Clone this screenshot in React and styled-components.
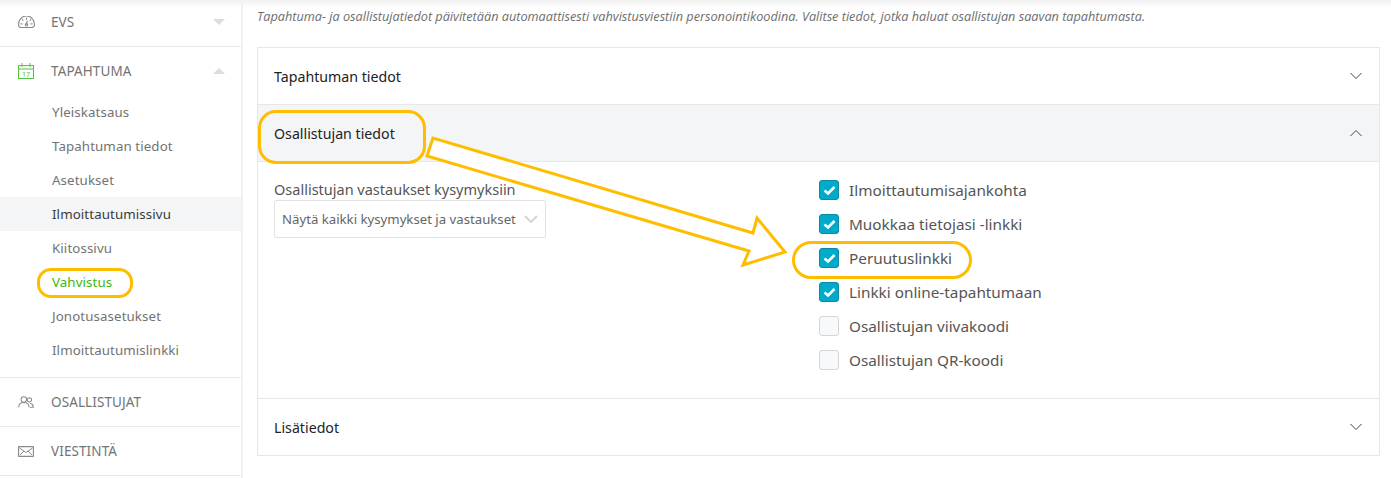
import styled, { createGlobalStyle } from "styled-components";

const GlobalStyle = createGlobalStyle`
  html, body {
    margin: 0;
    padding: 0;
    background: #fff;
    overflow: hidden;
  }
  * { box-sizing: border-box; }
`;

const Page = styled.div`
  position: relative;
  display: flex;
  width: 1391px;
  height: 478px;
  overflow: hidden;
  font-family: "Noto Sans", sans-serif;
`;

const TopShade = styled.div`
  position: absolute;
  left: 0;
  right: 0;
  top: 0;
  height: 8px;
  background: linear-gradient(#f1f1f1, rgba(255, 255, 255, 0));
`;

const Sidebar = styled.aside`
  width: 243px;
  flex: none;
  background: #fff;
  border-right: 2px solid #f1f1f2;
`;

const Section = styled.div`
  border-bottom: 1px solid #e9e9ea;
`;

const SectionHead = styled.div`
  display: flex;
  align-items: center;
  height: ${(p) => p.$height || 48}px;
  padding: 0 16px ${(p) => p.$bottom || 0}px 18px;
  color: #737373;
  font-size: 13.5px;
  letter-spacing: 0.1px;
`;

const IconSlot = styled.span`
  display: flex;
  width: 33px;
  flex: none;
`;

const SectionLabel = styled.span`
  flex: 1;
`;

const Triangle = styled.span`
  width: 0;
  height: 0;
  border-left: 6px solid transparent;
  border-right: 6px solid transparent;
  border-top: ${(p) => (p.$up ? "none" : "6px solid #dcdcdc")};
  border-bottom: ${(p) => (p.$up ? "6px solid #dcdcdc" : "none")};
`;

const SubList = styled.div`
  padding-bottom: 10px;
`;

const SubItem = styled.div`
  display: flex;
  align-items: center;
  height: 34px;
  padding-left: 52px;
  font-size: 13.3px;
  letter-spacing: 0.1px;
  color: ${(p) => (p.$current ? "#3fb60e" : p.$active ? "#3a3a3a" : "#737373")};
  background: ${(p) => (p.$active ? "#f4f5f7" : "transparent")};
`;

const Main = styled.main`
  flex: 1;
  padding: 9px 11px 0 14px;
`;

const Intro = styled.p`
  margin: 0 0 23px;
  height: 15px;
  line-height: 15px;
  font-family: "Open Sans", sans-serif;
  font-style: italic;
  font-size: 12.7px;
  color: #6e6e6e;
  white-space: nowrap;
`;

const Card = styled.div`
  width: 1123px;
  border: 1px solid #e6e7e8;
  background: #fff;
`;

const PanelHead = styled.div`
  display: flex;
  align-items: center;
  justify-content: space-between;
  height: ${(p) => p.$height || 57}px;
  padding: 0 16px;
  font-size: 14.2px;
  color: #222;
  background: ${(p) => (p.$open ? "#f4f5f7" : "#fff")};
  border-bottom: ${(p) => (p.$last ? "none" : "1px solid #e6e7e8")};
`;

const PanelBody = styled.div`
  display: grid;
  grid-template-columns: 545px 1fr;
  height: 237px;
  padding: 11px 16px 0;
  border-bottom: 1px solid #e6e7e8;
`;

const FieldColumn = styled.div`
  padding-top: 6px;
`;

const FieldLabel = styled.div`
  font-size: 14.5px;
  line-height: 20px;
  color: #555;
`;

const Select = styled.div`
  display: flex;
  align-items: center;
  justify-content: space-between;
  width: 272px;
  height: 38px;
  margin-top: 1px;
  padding: 0 7px 0 7px;
  border: 1px solid #e3e3e3;
  border-radius: 2px;
  font-size: 13.2px;
  color: #666;
  white-space: nowrap;
`;

const SelectArrow = styled.svg`
  flex: none;
`;

const CheckList = styled.div`
  display: flex;
  flex-direction: column;
`;

const CheckRow = styled.div`
  display: flex;
  align-items: center;
  gap: 10px;
  height: 34px;
  font-size: 15.3px;
  color: #555;
  white-space: nowrap;
`;

const Box = styled.span`
  display: flex;
  align-items: center;
  justify-content: center;
  width: 20px;
  height: 20px;
  flex: none;
  border-radius: 3px;
  border: 1px solid ${(p) => (p.$checked ? "#0b8ba5" : "#d5d6d8")};
  background: ${(p) => (p.$checked ? "#00aac9" : "#f8f9fa")};
`;

const Ring = styled.div`
  position: absolute;
  left: ${(p) => p.$x}px;
  top: ${(p) => p.$y}px;
  width: ${(p) => p.$w}px;
  height: ${(p) => p.$h}px;
  border: 3px solid #ffbd00;
  border-radius: ${(p) => p.$r}px;
`;

const ArrowLayer = styled.svg`
  position: absolute;
  left: 0;
  top: 0;
  pointer-events: none;
`;

const GaugeIcon = () => (
  <svg width="17" height="12" viewBox="0 0 18 13" fill="none" stroke="#8a8a8a" strokeWidth="1.200">
    <path d="M3.500 12.500h11a3 3 0 0 0 3-4A8.500 8.500 0 0 0 .5 8.500a3 3 0 0 0 3 4z" />
    <path d="M9 2v2M4 3.500l1.500 1.500M14 3.500l-1.500 1.500M2.500 8.500h2M13.500 8.500h2M8.500 9.500l1.500-4.500" />
    <circle cx="9" cy="9.500" r="1.300" />
  </svg>
);

const CalendarIcon = () => (
  <svg width="16" height="16" viewBox="0 0 16 16" fill="none" stroke="#54c23d" strokeWidth="1">
    <rect x=".5" y="2.500" width="15" height="13" />
    <path d="M.5 6h15M4 0v4M12 0v4" />
    <text x="8" y="14" textAnchor="middle" fontSize="7" fontFamily="Noto Sans, sans-serif" fill="#54c23d" stroke="none">17</text>
  </svg>
);

const UsersIcon = () => (
  <svg width="16" height="12" viewBox="0 0 18 14" fill="none" stroke="#8a8a8a" strokeWidth="1.200">
    <circle cx="6.500" cy="4" r="3.200" />
    <path d="M.5 13c0-3.500 2.500-5.500 6-5.500s6 2 6 5.500" />
    <circle cx="13" cy="4.500" r="2.500" />
    <path d="M14 8.500c2 .6 3.500 2.400 3.500 4.500h-4" />
  </svg>
);

const MailIcon = () => (
  <svg width="16" height="11" viewBox="0 0 16 11" fill="none" stroke="#8a8a8a" strokeWidth="1">
    <rect x=".5" y=".5" width="15" height="10" rx="1" strokeWidth="1.300" />
    <path d="M1.500 2l6.500 4.500L14.500 2M2 9l4-4M14 9l-4-4" />
  </svg>
);

const Chevron = ({ up }) => (
  <svg width="14" height="8" viewBox="0 0 14 8" fill="none" stroke="#444" strokeWidth="1">
    <path d={up ? "M1.500 7l5.500-5.500 5.500 5.500" : "M1.500 1l5.500 5.500 5.500-5.500"} />
  </svg>
);

const Tick = () => (
  <svg width="13" height="11" viewBox="0 0 13 11" fill="none" stroke="#fff" strokeWidth="2.600">
    <path d="M1.500 5.500l3.500 3 6.500-6.500" />
  </svg>
);

const subItems = [
  "Yleiskatsaus",
  "Tapahtuman tiedot",
  "Asetukset",
  "Ilmoittautumissivu",
  "Kiitossivu",
  "Vahvistus",
  "Jonotusasetukset",
  "Ilmoittautumislinkki",
];

const checks = [
  ["Ilmoittautumisajankohta", true],
  ["Muokkaa tietojasi -linkki", true],
  ["Peruutuslinkki", true],
  ["Linkki online-tapahtumaan", true],
  ["Osallistujan viivakoodi", false],
  ["Osallistujan QR-koodi", false],
];

export default function App() {
  return (
    <Page>
      <GlobalStyle />
      <Sidebar>
        <Section>
          <SectionHead $height={46} $bottom={2}>
            <IconSlot><GaugeIcon /></IconSlot>
            <SectionLabel>EVS</SectionLabel>
            <Triangle />
          </SectionHead>
        </Section>
        <Section>
          <SectionHead $height={48}>
            <IconSlot><CalendarIcon /></IconSlot>
            <SectionLabel>TAPAHTUMA</SectionLabel>
            <Triangle $up />
          </SectionHead>
          <SubList>
            {subItems.map((item) => (
              <SubItem key={item} $active={item === "Ilmoittautumissivu"} $current={item === "Vahvistus"}>
                {item}
              </SubItem>
            ))}
          </SubList>
        </Section>
        <Section>
          <SectionHead>
            <IconSlot><UsersIcon /></IconSlot>
            <SectionLabel>OSALLISTUJAT</SectionLabel>
          </SectionHead>
        </Section>
        <Section>
          <SectionHead>
            <IconSlot><MailIcon /></IconSlot>
            <SectionLabel>VIESTINTÄ</SectionLabel>
          </SectionHead>
        </Section>
      </Sidebar>

      <Main>
        <Intro>
          Tapahtuma- ja osallistujatiedot päivitetään automaattisesti vahvistusviestiin personointikoodina. Valitse tiedot, jotka haluat osallistujan saavan tapahtumasta.
        </Intro>
        <Card>
          <PanelHead>
            Tapahtuman tiedot
            <Chevron />
          </PanelHead>
          <PanelHead $open>
            Osallistujan tiedot
            <Chevron up />
          </PanelHead>
          <PanelBody>
            <FieldColumn>
              <FieldLabel>Osallistujan vastaukset kysymyksiin</FieldLabel>
              <Select>
                Näytä kaikki kysymykset ja vastaukset
                <SelectArrow width="14" height="8" viewBox="0 0 14 8" fill="none" stroke="#d5d5d5" strokeWidth="2">
                  <path d="M1 1l6 6 6-6" />
                </SelectArrow>
              </Select>
            </FieldColumn>
            <CheckList>
              {checks.map(([label, checked]) => (
                <CheckRow key={label}>
                  <Box $checked={checked}>{checked && <Tick />}</Box>
                  {label}
                </CheckRow>
              ))}
            </CheckList>
          </PanelBody>
          <PanelHead $last $height={56}>
            Lisätiedot
            <Chevron />
          </PanelHead>
        </Card>
      </Main>

      <TopShade />
      <Ring $x={37} $y={268} $w={96} $h={30} $r={14} />
      <Ring $x={258} $y={110} $w={168} $h={54} $r={18} />
      <Ring $x={792} $y={241} $w={180} $h={38} $r={19} />
      <ArrowLayer width="1391" height="478">
        <polygon
          points="433,138 427,156 749,251 743,265 785,252 757,218 753,233"
          fill="#fff"
          stroke="#ffbd00"
          strokeWidth="3"
        />
      </ArrowLayer>
    </Page>
  );
}
